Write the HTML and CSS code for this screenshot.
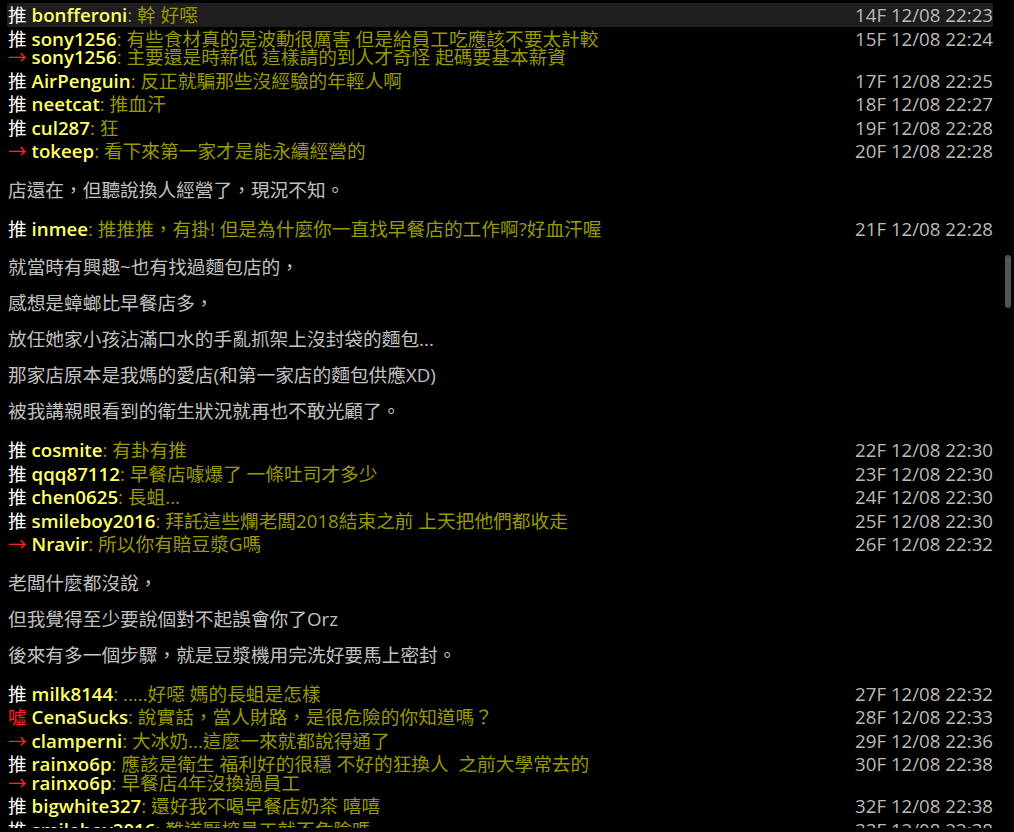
FILE: index.html
```html
<!DOCTYPE html>
<html lang="zh-Hant">
<head>
    <meta charset="UTF-8">
    <meta name="viewport" content="width=device-width, initial-scale=1.0">
    <title>推文</title>
    <link rel="stylesheet" href="styles.css">
</head>
<body>
    <div class="page">
        <div class="pushes">
            <div class="push active"><span class="line"><span class="tag">推</span> <span class="userid">bonfferoni</span><span class="content">: 幹 好噁</span></span><span class="time">14F 12/08 22:23</span></div>
            <div class="push"><span class="line"><span class="tag">推</span> <span class="userid">sony1256</span><span class="content">: 有些食材真的是波動很厲害 但是給員工吃應該不要太計較</span></span><span class="time">15F 12/08 22:24</span></div>
            <div class="push squeezed"><span class="line"><span class="tag red">→</span> <span class="userid">sony1256</span><span class="content">: 主要還是時薪低 這樣請的到人才奇怪 起碼要基本薪資</span></span></div>
            <div class="push"><span class="line"><span class="tag">推</span> <span class="userid">AirPenguin</span><span class="content">: 反正就騙那些沒經驗的年輕人啊</span></span><span class="time">17F 12/08 22:25</span></div>
            <div class="push"><span class="line"><span class="tag">推</span> <span class="userid">neetcat</span><span class="content">: 推血汗</span></span><span class="time">18F 12/08 22:27</span></div>
            <div class="push"><span class="line"><span class="tag">推</span> <span class="userid">cul287</span><span class="content">: 狂</span></span><span class="time">19F 12/08 22:28</span></div>
            <div class="push"><span class="line"><span class="tag red">→</span> <span class="userid">tokeep</span><span class="content">: 看下來第一家才是能永續經營的</span></span><span class="time">20F 12/08 22:28</span></div>
        </div>

        <p class="text">店還在，但聽說換人經營了，現況不知。</p>

        <div class="pushes">
            <div class="push"><span class="line"><span class="tag">推</span> <span class="userid">inmee</span><span class="content">: 推推推，有掛! 但是為什麼你一直找早餐店的工作啊?好血汗喔</span></span><span class="time">21F 12/08 22:28</span></div>
        </div>

        <p class="text">就當時有興趣~也有找過麵包店的，</p>
        <p class="text">感想是蟑螂比早餐店多，</p>
        <p class="text">放任她家小孩沾滿口水的手亂抓架上沒封袋的麵包...</p>
        <p class="text">那家店原本是我媽的愛店(和第一家店的麵包供應XD)</p>
        <p class="text">被我講親眼看到的衛生狀況就再也不敢光顧了。</p>

        <div class="pushes">
            <div class="push"><span class="line"><span class="tag">推</span> <span class="userid">cosmite</span><span class="content">: 有卦有推</span></span><span class="time">22F 12/08 22:30</span></div>
            <div class="push"><span class="line"><span class="tag">推</span> <span class="userid">qqq87112</span><span class="content">: 早餐店噱爆了 一條吐司才多少</span></span><span class="time">23F 12/08 22:30</span></div>
            <div class="push"><span class="line"><span class="tag">推</span> <span class="userid">chen0625</span><span class="content">: 長蛆...</span></span><span class="time">24F 12/08 22:30</span></div>
            <div class="push"><span class="line"><span class="tag">推</span> <span class="userid">smileboy2016</span><span class="content">: 拜託這些爛老闆2018結束之前 上天把他們都收走</span></span><span class="time">25F 12/08 22:30</span></div>
            <div class="push"><span class="line"><span class="tag red">→</span> <span class="userid">Nravir</span><span class="content">: 所以你有賠豆漿G嗎</span></span><span class="time">26F 12/08 22:32</span></div>
        </div>

        <p class="text">老闆什麼都沒說，</p>
        <p class="text">但我覺得至少要說個對不起誤會你了Orz</p>
        <p class="text">後來有多一個步驟，就是豆漿機用完洗好要馬上密封。</p>

        <div class="pushes">
            <div class="push"><span class="line"><span class="tag">推</span> <span class="userid">milk8144</span><span class="content">: .....好噁 媽的長蛆是怎樣</span></span><span class="time">27F 12/08 22:32</span></div>
            <div class="push"><span class="line"><span class="tag red">噓</span> <span class="userid">CenaSucks</span><span class="content">: 說實話，當人財路，是很危險的你知道嗎？</span></span><span class="time">28F 12/08 22:33</span></div>
            <div class="push"><span class="line"><span class="tag red">→</span> <span class="userid">clamperni</span><span class="content">: 大冰奶...這麼一來就都說得通了</span></span><span class="time">29F 12/08 22:36</span></div>
            <div class="push"><span class="line"><span class="tag">推</span> <span class="userid">rainxo6p</span><span class="content">: 應該是衛生 福利好的很穩 不好的狂換人&nbsp; 之前大學常去的</span></span><span class="time">30F 12/08 22:38</span></div>
            <div class="push squeezed"><span class="line"><span class="tag red">→</span> <span class="userid">rainxo6p</span><span class="content">: 早餐店4年沒換過員工</span></span></div>
            <div class="push"><span class="line"><span class="tag">推</span> <span class="userid">bigwhite327</span><span class="content">: 還好我不喝早餐店奶茶 嘻嘻</span></span><span class="time">32F 12/08 22:38</span></div>
            <div class="push"><span class="line"><span class="tag">推</span> <span class="userid">smileboy2016</span><span class="content">: 難道壓榨員工就不危險嗎</span></span><span class="time">33F 12/08 22:38</span></div>
        </div>
    </div>

    <div class="scrollbar"></div>
</body>
</html>
```

FILE: styles.css
```css
html, body {
    margin: 0;
    background-color: #000;
    overflow: hidden;
}
body {
    font-family: "Open Sans", "Noto Sans CJK TC", sans-serif;
    font-size: 18.7px;
    color: #c0c0c0;
}
.page {
    height: 828px;
    box-sizing: border-box;
    padding: 3px 21px 0 7px;
    overflow: hidden;
}
.pushes {
    margin: 15px 0;
}
.pushes:first-child {
    margin-top: 0;
}
.push {
    display: flex;
    justify-content: space-between;
    height: 23.5px;
    line-height: 23.5px;
    white-space: nowrap;
}
.push.active {
    background-color: #1e1e1e;
}
.push.squeezed {
    margin-top: -5px;
}
.line {
    padding-left: 1px;
}
.tag {
    color: #fff;
}
.tag.red {
    color: #f22;
}
.userid {
    color: #ff6;
    font-weight: 600;
}
.content {
    color: #990;
}
.time {
    color: #bbb;
}
.text {
    margin: 12px 0;
    line-height: 24px;
    padding-left: 1px;
}
.scrollbar {
    position: fixed;
    top: 255px;
    right: 3px;
    width: 6px;
    height: 53px;
    border-radius: 3px;
    background-color: #555;
}
```
